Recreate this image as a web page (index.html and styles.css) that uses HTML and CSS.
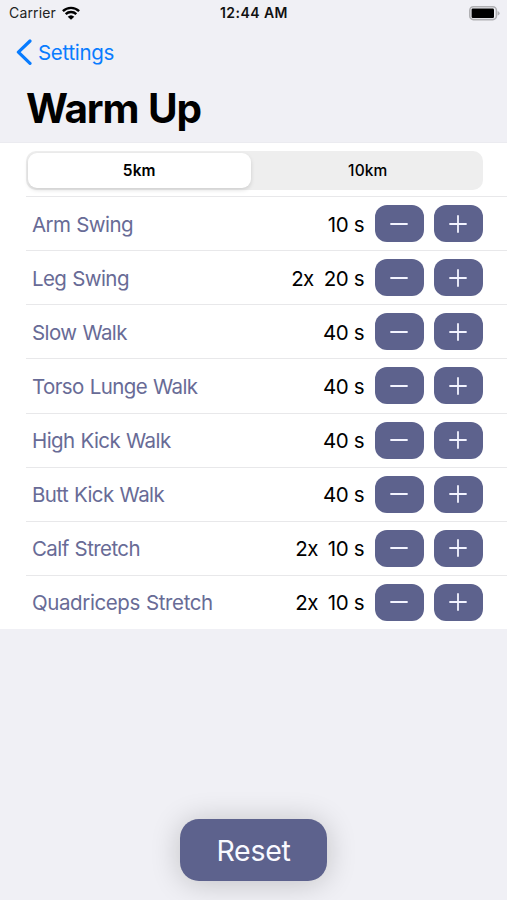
FILE: index.html
```html
<!DOCTYPE html>
<html lang="en">
<head>
<meta charset="utf-8">
<title>Warm Up</title>
<link rel="stylesheet" href="styles.css">
</head>
<body>
<svg class="defs" width="0" height="0" aria-hidden="true">
  <symbol id="minus" viewBox="0 0 18 18"><path d="M1 9H17"/></symbol>
  <symbol id="plus" viewBox="0 0 18 18"><path d="M1 9H17M9 1V17"/></symbol>
</svg>
<div class="screen">
  <header class="header">
    <div class="status">
      <div class="carrier"><span>Carrier</span>
        <svg class="wifi" width="18" height="14" viewBox="0 0 18 14"><path d="M.9 5.1a11.7 11.7 0 0 1 16.2 0" /><path d="M3.7 8.2a7.6 7.6 0 0 1 10.6 0"/><path class="dot" d="M9 13.8 5.7 10.7a4.8 4.8 0 0 1 6.6 0z"/></svg>
      </div>
      <div class="time">12:44 AM</div>
      <svg class="battery" width="31" height="15" viewBox="0 0 31 15"><rect class="case" x=".8" y=".8" width="26.6" height="12.8" rx="3.6"/><rect x="2.6" y="2.6" width="22.4" height="9.4" rx="1.2"/><path class="cap" d="M28.6 5v4.6q2-.7 2-2.3t-2-2.3z"/></svg>
    </div>
    <nav class="back">
      <svg width="16" height="26" viewBox="0 0 16 26"><path d="M14 2 2.4 13.2 14 24.4"/></svg>
      <span>Settings</span>
    </nav>
    <h1>Warm Up</h1>
  </header>
  <main class="list">
    <div class="picker"><div class="segments"><button class="segment selected">5km</button><button class="segment">10km</button></div></div>
    <div class="row"><span class="name">Arm Swing</span><span class="time-value">10 s</span><button><svg><use href="#minus"/></svg></button><button><svg><use href="#plus"/></svg></button></div>
    <div class="row"><span class="name">Leg Swing</span><span class="sets">2x</span><span class="time-value">20 s</span><button><svg><use href="#minus"/></svg></button><button><svg><use href="#plus"/></svg></button></div>
    <div class="row"><span class="name">Slow Walk</span><span class="time-value">40 s</span><button><svg><use href="#minus"/></svg></button><button><svg><use href="#plus"/></svg></button></div>
    <div class="row"><span class="name">Torso Lunge Walk</span><span class="time-value">40 s</span><button><svg><use href="#minus"/></svg></button><button><svg><use href="#plus"/></svg></button></div>
    <div class="row"><span class="name">High Kick Walk</span><span class="time-value">40 s</span><button><svg><use href="#minus"/></svg></button><button><svg><use href="#plus"/></svg></button></div>
    <div class="row"><span class="name">Butt Kick Walk</span><span class="time-value">40 s</span><button><svg><use href="#minus"/></svg></button><button><svg><use href="#plus"/></svg></button></div>
    <div class="row"><span class="name">Calf Stretch</span><span class="sets">2x</span><span class="time-value">10 s</span><button><svg><use href="#minus"/></svg></button><button><svg><use href="#plus"/></svg></button></div>
    <div class="row"><span class="name long">Quadriceps Stretch</span><span class="sets">2x</span><span class="time-value">10 s</span><button><svg><use href="#minus"/></svg></button><button><svg><use href="#plus"/></svg></button></div>
  </main>
  <footer><button class="reset">Reset</button></footer>
</div>
</body>
</html>
```
FILE: styles.css
```css
* { box-sizing: border-box; }
body { margin: 0; font-family: Inter, "Liberation Sans", sans-serif; color: #000; }
button { border: 0; padding: 0; margin: 0; font: inherit; color: inherit; }
.defs { position: absolute; }
.screen { width: 507px; height: 900px; background: #f0f0f5; display: flex; flex-direction: column; overflow: hidden; }
.header { height: 143px; flex: none; border-bottom: 1px solid #ebebf0; }
.status { height: 26px; padding: 0 7px 0 9px; display: grid; grid-template-columns: 1fr auto 1fr; align-items: center; }
.carrier { display: flex; align-items: center; gap: 6px; font-size: 14px; line-height: 16px; letter-spacing: .15px; color: #222; padding-bottom: 1px; }
.wifi path { fill: none; stroke: #000; stroke-width: 2.4; }
.wifi .dot { fill: #000; stroke: none; }
.time { font-size: 14px; line-height: 16px; padding-bottom: 1px; font-weight: 600; letter-spacing: .45px; color: #111; margin-right: 1px; }
.battery { justify-self: end; }
.battery .case { fill: #f0f0f5; stroke: #b0b0b3; stroke-width: 1.6; }
.battery .cap { fill: #b0b0b3; }
.back { height: 52px; padding-left: 16px; display: flex; align-items: center; gap: 6px; color: #087cff; font-size: 20.5px; letter-spacing: -.3px; }
.back path { fill: none; stroke: #087cff; stroke-width: 3.2; stroke-linecap: round; stroke-linejoin: round; }
h1 { margin: 4px 0 0 26px; font-size: 40.5px; line-height: 54px; font-weight: 700; letter-spacing: -1.2px; word-spacing: 1.5px; }
.list { background: #fff; height: 486px; flex: none; }
.picker { height: 53px; padding: 8px 24px 0 26px; }
.segments { height: 39px; background: #eee; border-radius: 10px; display: grid; grid-template-columns: 1fr 1fr; padding: 2px; }
.segment { background: transparent; font-size: 15.5px; font-weight: 500; letter-spacing: .1px; border-radius: 9px; }
.segment.selected { background: #fff; font-weight: 600; margin-right: 4px; box-shadow: 0 2px 4px #0002; }
.row { height: 54.125px; margin-left: 26px; padding: 0 24px 0 6px; border-top: 1px solid #e8e8ea; display: flex; align-items: center; font-size: 20.5px; }
.name { margin-right: auto; color: #686b96; letter-spacing: -.6px; word-spacing: .8px; }
.name.long { letter-spacing: -.4px; }
.name, .sets, .time-value { padding-top: 1px; }
.sets { margin-right: 10px; letter-spacing: -.6px; }
.time-value { margin-right: 11px; letter-spacing: -.5px; word-spacing: .3px; }
.row button { width: 49px; height: 37px; border-radius: 12px; background: #5d628d; display: flex; align-items: center; justify-content: center; padding-right: 1px; }
.row button + button { margin-left: 10px; }
.row svg { width: 18px; height: 18px; fill: none; stroke: #f3f4ff; stroke-width: 1.8; stroke-linecap: round; }
footer { margin: auto 0 19px; display: flex; justify-content: center; }
.reset { width: 147px; height: 62px; border-radius: 19px; background: #5d628d; color: #f8f9ff; font-size: 28.5px; letter-spacing: -.3px; box-shadow: 0 2px 30px #0003; }
```
